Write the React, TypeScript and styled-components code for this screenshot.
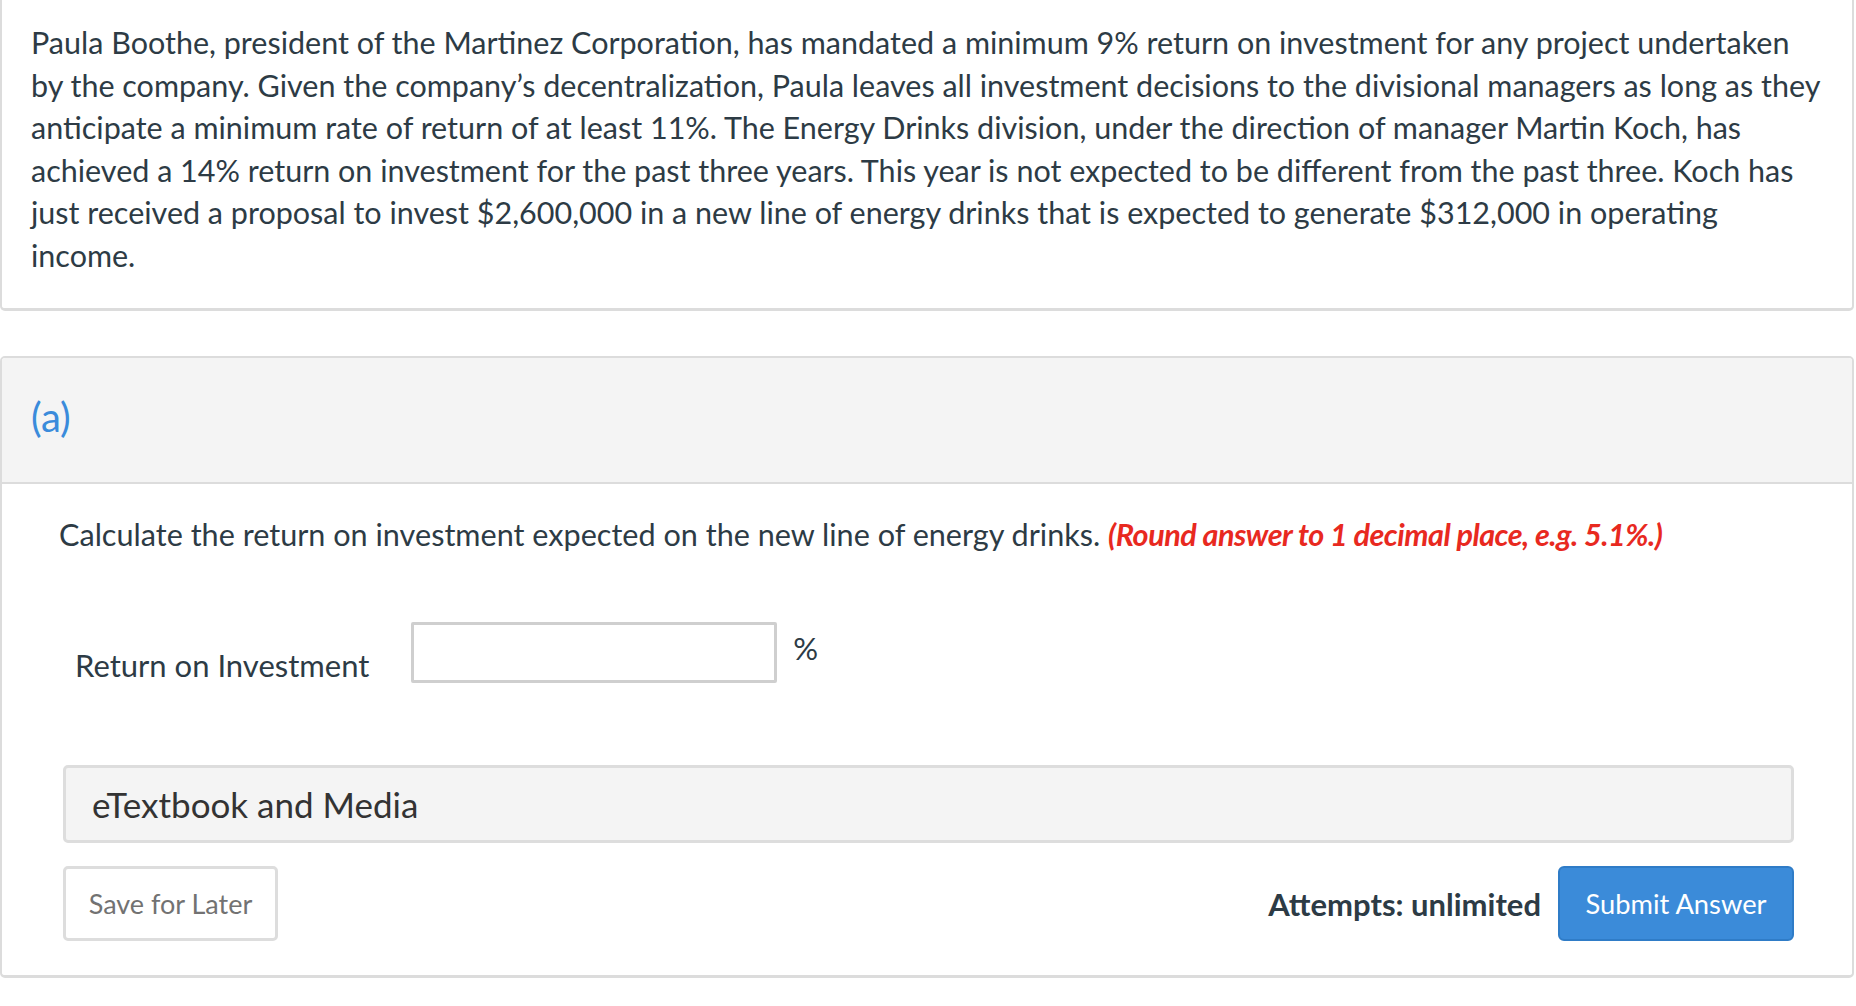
import React from "react";
import styled, { createGlobalStyle } from "styled-components";

const GlobalStyle = createGlobalStyle`
  html, body {
    margin: 0;
    padding: 0;
    background: #ffffff;
  }
  body {
    font-family: Lato, "Open Sans", "Liberation Sans", sans-serif;
    color: #2d3b45;
  }
`;

const Page = styled.div`
  display: flex;
  flex-direction: column;
  gap: 45px;
  padding: 0 2px 29px 0;
`;

const Card = styled.section<{ $open?: boolean }>`
  background: #ffffff;
  border: 2px solid #dcdcdc;
  border-bottom-width: 3px;
  border-radius: 5px;
  ${(p) => (p.$open ? "border-top: 0; border-top-left-radius: 0; border-top-right-radius: 0;" : "")}
  overflow: hidden;
`;

const Passage = styled.p`
  margin: 0;
  padding: 21px 30px 31px 29px;
  font-size: 30.5px;
  line-height: 42.6px;
`;

const PartHeader = styled.header`
  background: #f4f4f4;
  border-bottom: 2px solid #dcdcdc;
  height: 126px;
  display: flex;
  align-items: center;
  padding: 0 29px;
  padding-bottom: 6px;
  box-sizing: border-box;
`;

const PartLabel = styled.h2`
  margin: 0;
  font-weight: 400;
  font-size: 40px;
  color: #3a8bdb;
`;

const PartBody = styled.div`
  display: flex;
  flex-direction: column;
  padding: 30px 58px 34px 57px;
`;

const Question = styled.p`
  margin: 0;
  font-size: 30.6px;
  line-height: 42.6px;
`;

const Hint = styled.em`
  font-weight: 700;
  color: #e8291f;
  letter-spacing: -0.5px;
`;

const AnswerRow = styled.div`
  display: flex;
  align-items: flex-end;
  margin-top: 66px;
  padding-left: 16px;
`;

const FieldLabel = styled.label`
  font-size: 31px;
  line-height: 42px;
  margin-bottom: -3px;
  margin-right: 42px;
`;

const Input = styled.input`
  width: 366px;
  height: 61px;
  box-sizing: border-box;
  border: 3px solid #cfcfcf;
  border-radius: 2px;
  background: #fff;
  font-family: inherit;
  font-size: 28px;
  padding: 0 12px;
  outline: none;
`;

const Unit = styled.span`
  align-self: flex-start;
  font-size: 31px;
  line-height: 42px;
  margin-left: 16px;
  margin-top: 5px;
`;

const MediaBar = styled.div`
  margin: 82px 0 0 4px;
  height: 78px;
  box-sizing: border-box;
  background: #f4f4f4;
  border: 3px solid #dddddd;
  border-radius: 5px;
  display: flex;
  align-items: center;
  padding: 0 26px;
  font-size: 35px;
  color: #333;
`;

const Footer = styled.div`
  display: flex;
  align-items: center;
  margin: 23px 0 0 4px;
`;

const SaveButton = styled.button`
  width: 215px;
  height: 75px;
  box-sizing: border-box;
  background: #ffffff;
  border: 3px solid #dddddd;
  border-radius: 5px;
  font-family: inherit;
  font-size: 27px;
  color: #727272;
  cursor: pointer;
`;

const Spacer = styled.div`
  flex: 1;
`;

const Attempts = styled.span`
  font-size: 31px;
  font-weight: 700;
  color: #2d3b45;
  margin-right: 17px;
`;

const SubmitButton = styled.button`
  width: 236px;
  height: 75px;
  box-sizing: border-box;
  background: #3b8bd9;
  border: 2px solid #2f7cc7;
  border-radius: 6px;
  font-family: inherit;
  font-size: 27.3px;
  color: #ffffff;
  cursor: pointer;
`;

export default function App() {
  return (
    <>
      <GlobalStyle />
      <Page>
        <Card $open>
          <Passage>
            Paula Boothe, president of the Martinez Corporation, has mandated a minimum 9% return on investment for any
            project undertaken by the company. Given the company’s decentralization, Paula leaves all investment
            decisions to the divisional managers as long as they anticipate a minimum rate of return of at least 11%.
            The Energy Drinks division, under the direction of manager Martin Koch, has achieved a 14% return on
            investment for the past three years. This year is not expected to be different from the past three. Koch
            has just received a proposal to invest $2,600,000 in a new line of energy drinks that is expected to
            generate $312,000 in operating income.
          </Passage>
        </Card>
        <Card>
          <PartHeader>
            <PartLabel>(a)</PartLabel>
          </PartHeader>
          <PartBody>
            <Question>
              Calculate the return on investment expected on the new line of energy drinks.{" "}
              <Hint>(Round answer to 1 decimal place, e.g. 5.1%.)</Hint>
            </Question>
            <AnswerRow>
              <FieldLabel htmlFor="roi">Return on Investment</FieldLabel>
              <Input id="roi" type="text" />
              <Unit>%</Unit>
            </AnswerRow>
            <MediaBar>eTextbook and Media</MediaBar>
            <Footer>
              <SaveButton>Save for Later</SaveButton>
              <Spacer />
              <Attempts>Attempts: unlimited</Attempts>
              <SubmitButton>Submit Answer</SubmitButton>
            </Footer>
          </PartBody>
        </Card>
      </Page>
    </>
  );
}
